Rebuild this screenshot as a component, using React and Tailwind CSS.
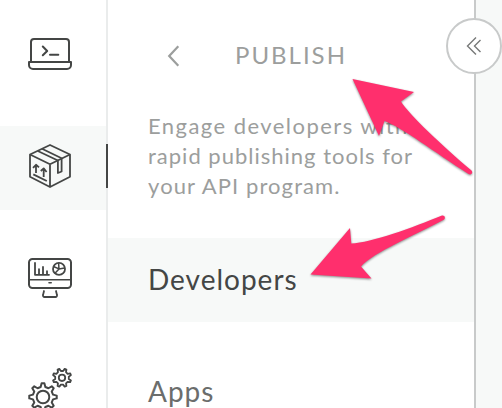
const ink = "#444645";

function LaptopIcon() {
  return (
    <svg width="48" height="48" viewBox="26 32 48 48" fill="none" stroke={ink} strokeWidth="2" strokeLinecap="round" strokeLinejoin="round">
      <path d="M31 62V42a3 3 0 0 1 3-3h32a3 3 0 0 1 3 3v20" />
      <path d="M29 62h42v3a4 4 0 0 1-4 4H33a4 4 0 0 1-4-4z" />
      <path d="M42.8 46.5l4.4 4.5-4.4 4.3M50 54.7h8.3" />
    </svg>
  );
}

function BoxIcon() {
  return (
    <svg width="48" height="48" viewBox="26 144 48 48" fill="none" stroke={ink} strokeWidth="1.8" strokeLinejoin="round">
      <path d="M50 145l20 9.5v22.3L50 187l-20-10.2v-22.3zM30 154.500l20 9.800 20-9.800M50 164.300V187" />
      <path d="M42 148.800l19.600 9.500v13.200l-3.700 1.500v-12.500L37.800 151" />
      <path d="M36 173v-7.400M33 167.800l3-3 3 2.600M43.700 177v-7.600M40.800 171l2.900-2.600 2.900 3.600M33.300 174.400l13.500 6.600" />
    </svg>
  );
}

function MonitorIcon() {
  return (
    <svg width="48" height="48" viewBox="26 256 48 48" fill="none" stroke={ink} strokeWidth="2" strokeLinejoin="round" strokeLinecap="round">
      <rect x="29" y="259" width="42" height="29" rx="3.5" />
      <path d="M29 279.7h42" strokeWidth="1.6" />
      <path d="M35 263v11.8h14M39 274v-4.8M43 274v-7M47 274v-2.8" strokeWidth="1.8" />
      <circle cx="59" cy="268.9" r="6" strokeWidth="1.8" />
      <path d="M58.600 263.500l.4 5.400 5.500-.8M59 268.900l-5-2.200M59 268.900l-3.800 4.200" strokeWidth="1.5" />
      <path d="M49 282.7h2.2" strokeWidth="1.6" />
      <path d="M44 291l-1 4.1a1.5 1.5 0 0 0 1.5 1.9h11a1.5 1.5 0 0 0 1.5-1.9l-1-4.1" strokeWidth="1.8" />
    </svg>
  );
}

// Outline of an eight-toothed gear with slightly tapered teeth.
function gearPath(cx, cy, outer, inner, turn) {
  const points = [];
  for (let i = 0; i < 8; i++) {
    const mid = (i * 45 + turn) * (Math.PI / 180);
    for (const [offset, radius] of [[-0.23, inner], [-0.1, outer], [0.1, outer], [0.23, inner]]) {
      const a = mid + offset;
      points.push(`${(cx + radius * Math.cos(a)).toFixed(2)} ${(cy + radius * Math.sin(a)).toFixed(2)}`);
    }
  }
  return `M${points.join("L")}Z`;
}

function GearsIcon() {
  return (
    <svg width="48" height="48" viewBox="26 368 48 48" fill="none" stroke={ink} strokeWidth="2" strokeLinejoin="round">
      <path d={gearPath(43, 397, 13.8, 10.3, 90)} />
      <circle cx="43" cy="397" r="6.3" />
      <path d={gearPath(62, 377.8, 9.3, 6.9, 22.5)} strokeWidth="1.8" />
      <circle cx="62" cy="377.8" r="3.2" strokeWidth="1.8" />
    </svg>
  );
}

function RailItem({ active, children }) {
  return (
    <div className={active ? "flex h-[84px] shrink-0 bg-[linear-gradient(to_right,#f7f9f8_106px,transparent_106px)]" : "flex h-[84px] shrink-0"}>
      <div className="flex w-[106px] items-center justify-center pr-[6px]">{children}</div>
      <div className={active ? "mt-[18px] h-11 w-0.5 bg-[#444645]" : "w-0.5"} />
    </div>
  );
}

function Arrow({ d }) {
  return <path d={d} fill="#ff2f6d" />;
}

export default function App() {
  return (
    <div className="relative flex h-[408px] w-[502px] overflow-hidden bg-[#f7f9f8] font-['Lato',sans-serif]">
      <nav className="flex w-[108px] shrink-0 flex-col gap-7 bg-white bg-[linear-gradient(to_right,transparent_106px,#eaecec_106px)] pt-3.5">
        <RailItem><LaptopIcon /></RailItem>
        <RailItem active><BoxIcon /></RailItem>
        <RailItem><MonitorIcon /></RailItem>
        <RailItem><GearsIcon /></RailItem>
      </nav>

      <main className="flex w-[368px] shrink-0 flex-col border-r-2 border-[#c8caca] bg-white">
        <header className="flex h-[111px] shrink-0 items-center pl-[58px] text-[#9c9e9d]">
          <svg width="14" height="24" viewBox="0 0 14 24" fill="none" stroke="currentColor" strokeWidth="2.2">
            <path d="M12.3 2.2L3.2 12l9.1 9.8" />
          </svg>
          <h1 className="ml-[55px] pb-0.5 text-2xl tracking-[2px]">PUBLISH</h1>
        </header>
        <p className="h-[127px] shrink-0 whitespace-nowrap pl-10 text-[22px] leading-[30px] text-[#9c9e9d]">
          <span className="block tracking-[1.45px]">Engage developers with</span>
          <span className="block tracking-[1px]">rapid publishing tools for</span>
          <span className="block tracking-[1.1px]">your API program.</span>
        </p>
        <a className="flex h-[84px] shrink-0 items-center bg-[#f7f9f8] pb-0.5 pl-10 text-[28px] tracking-[1px] text-[#444645]">Developers</a>
        <a className="mt-7 flex h-[84px] shrink-0 items-center pb-0.5 pl-10 text-[28px] tracking-[1px] text-[#6b6d6c]">Apps</a>
      </main>

      <button className="absolute left-[446px] top-[18px] flex size-14 items-center justify-center rounded-full border-2 border-[#c8caca] bg-white">
        <svg width="16" height="20" viewBox="0 0 16 20" fill="none" stroke="#777978" strokeWidth="1.4">
          <path d="M10 1.500L1.500 10l8.500 8.500M14.500 4l-6 6 6 6" />
        </svg>
      </button>

      <svg className="pointer-events-none absolute inset-0 drop-shadow-[0_1px_1px_rgba(0,0,0,0.45)]" width="502" height="408" viewBox="0 0 502 408">
        <Arrow d="M352.5 79L414 92l-13 9.500c8 13 41 44 70.500 69 2 2.500-.5 5-3 3.500C434 152 403 128 384.500 121L379 136z" />
        <Arrow d="M310.500 274.500L350 228l1.300 15.500C371 243 413 227.500 442 215.600c3-.6 3.800 3 1.700 4.200C414 236 374 252 361 266.500l10.500 12z" />
      </svg>
    </div>
  );
}
